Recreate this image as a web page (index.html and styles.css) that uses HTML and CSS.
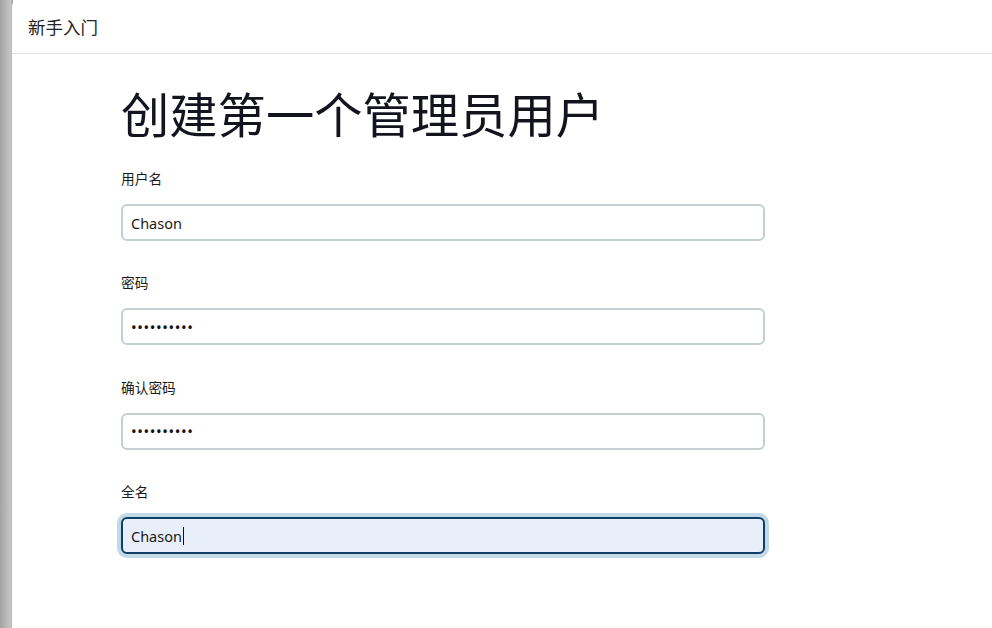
FILE: index.html
```html
<!DOCTYPE html>
<html lang="zh-CN">
<head>
<meta charset="utf-8">
<title>新手入门</title>
<link rel="stylesheet" href="styles.css">
</head>
<body>
<div class="backdrop"></div>
<div class="modal">
  <div class="modal-header">新手入门</div>
  <div class="modal-body">
    <h1 class="title">创建第一个管理员用户</h1>
    <form class="form">
      <div class="field">
        <label class="label">用户名</label>
        <div class="input">Chason</div>
      </div>
      <div class="field">
        <label class="label">密码</label>
        <div class="input dots">••••••••••</div>
      </div>
      <div class="field">
        <label class="label">确认密码</label>
        <div class="input dots">••••••••••</div>
      </div>
      <div class="field">
        <label class="label">全名</label>
        <div class="input focus">Chason<span class="caret"></span></div>
      </div>
    </form>
  </div>
</div>
</body>
</html>
```
FILE: styles.css
```css
html, body {
  margin: 0;
  height: 100%;
}
body {
  display: flex;
  background: #fff;
  font-family: "Noto Sans", "Noto Sans CJK SC", sans-serif;
  color: #1a1a1a;
  overflow: hidden;
}
.backdrop {
  width: 13px;
  flex: none;
  background: linear-gradient(to right, #a3a3a3, #c6c6c6 85%, #8e8e8e);
}
.modal {
  flex: 1;
  background: #fff;
  border-top-left-radius: 6px;
  margin-left: -1px;
}
.modal-header {
  height: 54px;
  box-sizing: border-box;
  border-bottom: 1px solid #e3e3e3;
  padding-left: 16px;
  display: flex;
  align-items: center;
  font-size: 17.5px;
  color: #222;
}
.modal-body {
  padding-left: 109px;
}
.title {
  margin: 30px 0 0;
  font-size: 48.3px;
  font-weight: 400;
  line-height: 60px;
  color: #14141f;
  letter-spacing: 0;
}
.form {
  margin-top: 25px;
  display: flex;
  flex-direction: column;
  gap: 32.4px;
}
.field {
  display: flex;
  flex-direction: column;
}
.label {
  font-size: 13.7px;
  line-height: 20px;
  color: #1a1a1a;
  margin-bottom: 15px;
}
.input {
  width: 644px;
  height: 37px;
  box-sizing: border-box;
  border: 2px solid #c5ced2;
  border-radius: 6px;
  padding: 0 8px;
  display: flex;
  align-items: center;
  font-size: 14.5px;
  color: #1a1a1a;
}
.input.dots {
  font-size: 15px;
  letter-spacing: 0.6px;
  color: #111;
}
.input.focus {
  background: #e8effb;
  border-color: #0f3f63;
  box-shadow: 0 0 0 4px #c2d9e7;
}
.caret {
  display: inline-block;
  width: 1px;
  height: 18px;
  background: #111;
  margin-left: 1px;
}
```
